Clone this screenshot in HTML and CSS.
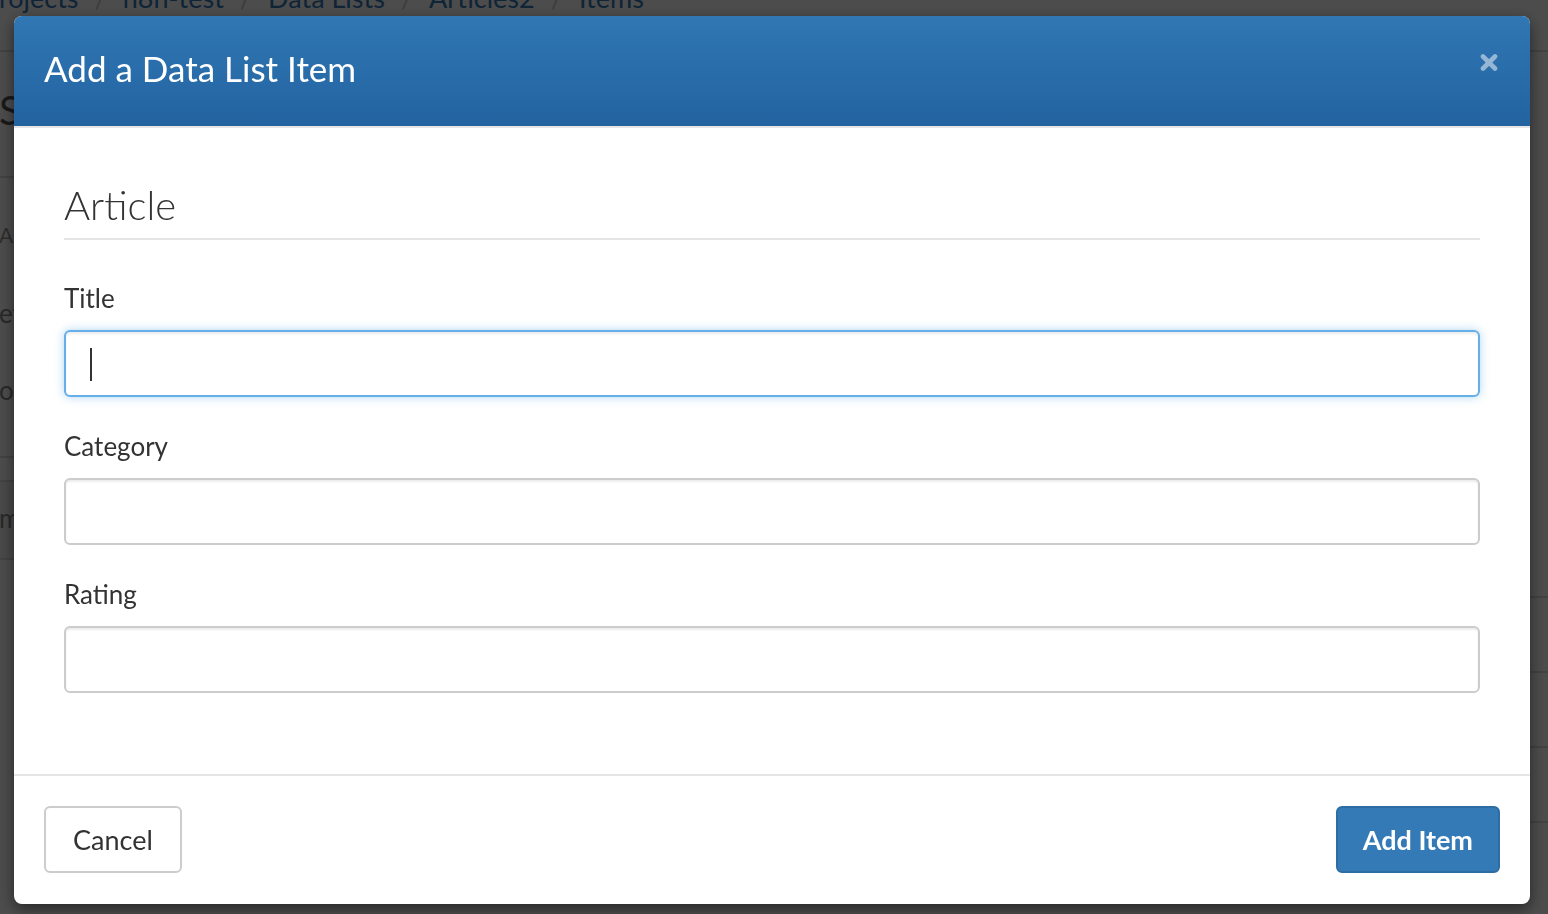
FILE: index.html
```html
<!DOCTYPE html>
<html>
<head>
    <title>Add a Data List Item</title>
    <link rel="stylesheet" href="styles.css">
</head>
<body>
    <div class="page">
        <div class="topbar">
            <ol class="crumbs">
                <li><a href="#">Projects</a></li>
                <li><a href="#">h8n-test</a></li>
                <li><a href="#">Data Lists</a></li>
                <li><a href="#">Articles2</a></li>
                <li><a href="#">Items</a></li>
            </ol>
        </div>

        <div class="layout">
            <aside class="sidebar">
                <div class="side-head">
                    <h2 class="side-title">Schema</h2>
                </div>
                <p class="side-label">All fields</p>
                <ul class="side-nav">
                    <li>events</li>
                    <li>options</li>
                </ul>
                <ul class="side-nav side-nav-split">
                    <li class="active">members</li>
                </ul>
            </aside>

            <div class="main">
                <div class="main-head"></div>
                <div class="table-row"></div>
                <div class="table-row"></div>
                <div class="table-row"></div>
                <div class="table-row"></div>
            </div>
        </div>
    </div>

    <div class="backdrop"></div>

    <div class="modal-frame">
        <div class="modal">
            <div class="modal-header">
                <h4 class="modal-title">Add a Data List Item</h4>
                <button class="close" type="button" aria-label="Close">
                    <svg width="18" height="19" viewBox="0 0 18 19">
                        <path d="M3 3.5 L15 15.5 M15 3.5 L3 15.5" stroke="#fff" stroke-width="4.6" stroke-linecap="round" fill="none"/>
                    </svg>
                </button>
            </div>

            <form class="modal-body">
                <h3 class="form-legend">Article</h3>

                <div class="form-group">
                    <label for="title">Title</label>
                    <div class="input-wrap">
                        <input type="text" id="title" name="title" class="form-control is-focused">
                        <span class="caret"></span>
                    </div>
                </div>

                <div class="form-group">
                    <label for="category">Category</label>
                    <input type="text" id="category" name="category" class="form-control">
                </div>

                <div class="form-group">
                    <label for="rating">Rating</label>
                    <input type="text" id="rating" name="rating" class="form-control">
                </div>
            </form>

            <div class="modal-footer">
                <button class="btn btn-default" type="button">Cancel</button>
                <button class="btn btn-primary" type="button">Add Item</button>
            </div>
        </div>
    </div>
</body>
</html>
```

FILE: styles.css
```css
* {
    box-sizing: border-box;
}
body {
    margin: 0;
    height: 914px;
    overflow: hidden;
    font-family: Lato, "Open Sans", sans-serif;
    color: #333;
    background: #fff;
}

/* page behind the modal */
.page {
    height: 914px;
    overflow: hidden;
}
.topbar {
    height: 52px;
    overflow: hidden;
    border-bottom: 2px solid #ddd;
}
.crumbs {
    list-style: none;
    display: flex;
    margin: -19px 0 0 -17px;
    padding: 0;
    font-size: 27px;
    line-height: 34px;
    white-space: nowrap;
}
.crumbs li + li::before {
    content: "/";
    color: #ccc;
    padding: 0 16px;
}
.crumbs a {
    color: #337ab7;
    text-decoration: none;
}
.layout {
    display: flex;
}
.sidebar {
    width: 300px;
    margin-left: -1px;
}
.side-head {
    height: 126px;
    padding-top: 34px;
    border-bottom: 2px solid #ddd;
}
.side-title {
    margin: 0;
    font-size: 40px;
    line-height: 48px;
    font-weight: 400;
    color: #555;
}
.side-label {
    margin: 42px 0 24px;
    font-size: 21px;
    line-height: 30px;
    color: #999;
    text-transform: uppercase;
}
.side-nav {
    list-style: none;
    margin: 0;
    padding: 0;
}
.side-nav li {
    font-size: 26px;
    line-height: 36px;
    padding: 21px 0 20px;
    color: #888;
}
.side-nav-split {
    margin-top: 28px;
    padding-top: 22px;
    border-top: 2px solid #ddd;
}
.side-nav-split li {
    padding: 18px 0 22px;
    border-top: 2px solid #ddd;
    border-bottom: 2px solid #ddd;
    background: #f3f3f3;
}
.main {
    flex: 1;
}
.main-head {
    height: 544px;
}
.table-row {
    height: 75px;
    border-top: 2px solid #ddd;
}

/* modal */
.backdrop {
    position: fixed;
    top: 0;
    right: 0;
    bottom: 0;
    left: 0;
    background: rgba(0, 0, 0, 0.7);
}
.modal-frame {
    position: fixed;
    top: 0;
    right: 0;
    bottom: 0;
    left: 0;
    padding: 16px 0 0 14px;
}
.modal {
    width: 1516px;
    background: #fff;
    border-radius: 8px;
    box-shadow: 0 5px 15px rgba(0, 0, 0, 0.5);
}
.modal-header {
    display: flex;
    justify-content: space-between;
    align-items: flex-start;
    height: 112px;
    padding: 30px 32px 0 30px;
    background: linear-gradient(#3077b4, #2263a0);
    border-bottom: 2px solid #e5e5e5;
    border-radius: 8px 8px 0 0;
}
.modal-title {
    margin: 0;
    font-size: 35px;
    line-height: 44px;
    font-weight: 400;
    color: #fff;
}
.close {
    margin-top: 7px;
    padding: 0;
    border: none;
    background: none;
    opacity: 0.5;
    cursor: pointer;
}
.close svg {
    display: block;
}
.modal-body {
    margin: 0;
    padding: 53px 50px 50px;
}
.form-legend {
    margin: 0 0 40px;
    padding-bottom: 9px;
    font-size: 40px;
    line-height: 48px;
    font-weight: 300;
    border-bottom: 2px solid #e5e5e5;
}
.form-group {
    margin-bottom: 31px;
}
.form-group label {
    display: block;
    margin-bottom: 14px;
    font-size: 26px;
    line-height: 36px;
}
.input-wrap {
    position: relative;
}
.form-control {
    display: block;
    width: 100%;
    height: 67px;
    padding: 0 24px;
    font-family: inherit;
    font-size: 27px;
    color: #555;
    background: #fff;
    border: 2px solid #ccc;
    border-radius: 6px;
    box-shadow: inset 0 2px 2px rgba(0, 0, 0, 0.075);
    outline: none;
}
.form-control.is-focused {
    border-color: #66afe9;
    box-shadow: inset 0 2px 2px rgba(0, 0, 0, 0.075), 0 0 10px rgba(102, 175, 233, 0.5);
}
.caret {
    position: absolute;
    left: 26px;
    top: 18px;
    width: 2px;
    height: 33px;
    background: #333;
}
.modal-footer {
    display: flex;
    justify-content: space-between;
    padding: 30px 30px 31px;
    border-top: 2px solid #e5e5e5;
}
.btn {
    height: 67px;
    padding: 0 27px;
    font-family: inherit;
    font-size: 27px;
    border: 2px solid;
    border-radius: 6px;
    cursor: pointer;
}
.btn-default {
    color: #333;
    background: #fff;
    border-color: #ccc;
}
.btn-primary {
    padding: 0 25px;
    font-weight: 700;
    color: #fff;
    background: #337ab7;
    border-color: #2e6da4;
}
```
